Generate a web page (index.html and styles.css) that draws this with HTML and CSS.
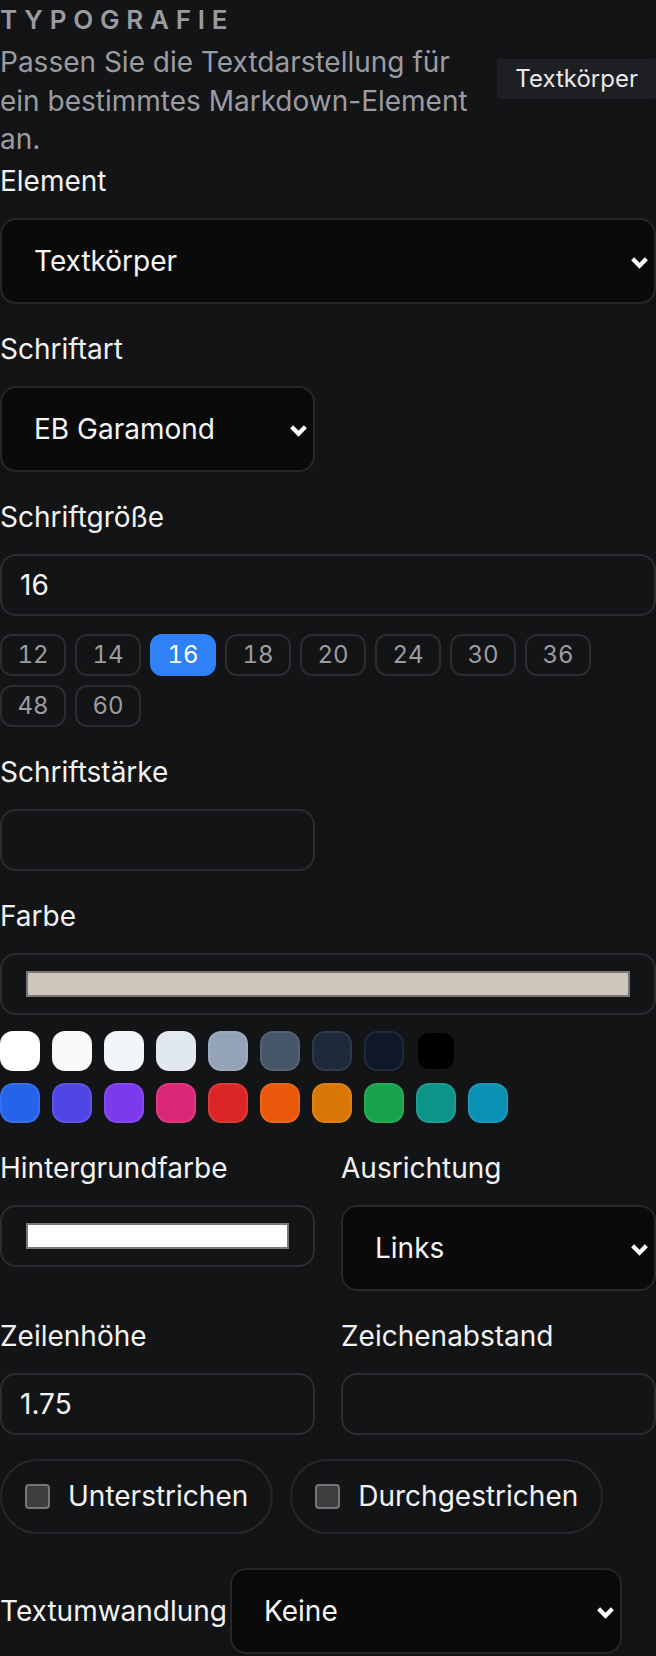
FILE: index.html
```html
<!DOCTYPE html>
<html lang="de">
<head>
    <meta charset="UTF-8">
    <meta name="viewport" content="width=device-width, initial-scale=1.0">
    <title>Typografie</title>
    <link rel="stylesheet" href="styles.css">
</head>
<body>
    <div class="panel">
        <div class="panel-head">
            <div class="panel-intro">
                <h2 class="panel-title">Typografie</h2>
                <p class="panel-desc">Passen Sie die Textdarstellung für ein bestimmtes Markdown-Element an.</p>
            </div>
            <span class="badge">Textkörper</span>
        </div>

        <div class="field">
            <label for="element">Element</label>
            <div class="select-wrap">
                <select id="element">
                    <option>Textkörper</option>
                    <option>Überschrift 1</option>
                    <option>Überschrift 2</option>
                    <option>Zitat</option>
                </select>
                <svg class="chevron" viewBox="0 0 18 12"><path d="M2.5 2.5l6.5 6.5 6.5-6.5"/></svg>
            </div>
        </div>

        <div class="field">
            <label for="fontFamily">Schriftart</label>
            <div class="select-wrap half">
                <select id="fontFamily">
                    <option>EB Garamond</option>
                    <option>Inter</option>
                    <option>Lato</option>
                </select>
                <svg class="chevron" viewBox="0 0 18 12"><path d="M2.5 2.5l6.5 6.5 6.5-6.5"/></svg>
            </div>
        </div>

        <div class="field">
            <label for="fontSize">Schriftgröße</label>
            <input type="text" id="fontSize" class="text-input" value="16">
            <div class="chips">
                <button class="chip">12</button>
                <button class="chip">14</button>
                <button class="chip active">16</button>
                <button class="chip">18</button>
                <button class="chip">20</button>
                <button class="chip">24</button>
                <button class="chip">30</button>
                <button class="chip">36</button>
                <button class="chip">48</button>
                <button class="chip">60</button>
            </div>
        </div>

        <div class="field">
            <label for="fontWeight">Schriftstärke</label>
            <input type="text" id="fontWeight" class="text-input half">
        </div>

        <div class="field">
            <label for="color">Farbe</label>
            <input type="color" id="color" class="color-input" value="#cdc6b9">
            <div class="swatches">
                <div class="swatch-row">
                    <span class="swatch" style="background:#ffffff"></span>
                    <span class="swatch" style="background:#f8fafc"></span>
                    <span class="swatch" style="background:#f1f5f9"></span>
                    <span class="swatch" style="background:#e2e8f0"></span>
                    <span class="swatch" style="background:#94a3b8"></span>
                    <span class="swatch" style="background:#475569"></span>
                    <span class="swatch" style="background:#1e293b"></span>
                    <span class="swatch" style="background:#0f172a"></span>
                    <span class="swatch" style="background:#000000"></span>
                </div>
                <div class="swatch-row">
                    <span class="swatch" style="background:#2563eb"></span>
                    <span class="swatch" style="background:#4f46e5"></span>
                    <span class="swatch" style="background:#7c3aed"></span>
                    <span class="swatch" style="background:#db2777"></span>
                    <span class="swatch" style="background:#dc2626"></span>
                    <span class="swatch" style="background:#ea580c"></span>
                    <span class="swatch" style="background:#d97706"></span>
                    <span class="swatch" style="background:#16a34a"></span>
                    <span class="swatch" style="background:#0d9488"></span>
                    <span class="swatch" style="background:#0891b2"></span>
                </div>
            </div>
        </div>

        <div class="field-row">
            <div class="field">
                <label for="bgColor">Hintergrundfarbe</label>
                <input type="color" id="bgColor" class="color-input" value="#ffffff">
            </div>
            <div class="field">
                <label for="align">Ausrichtung</label>
                <div class="select-wrap">
                    <select id="align">
                        <option>Links</option>
                        <option>Zentriert</option>
                        <option>Rechts</option>
                    </select>
                    <svg class="chevron" viewBox="0 0 18 12"><path d="M2.5 2.5l6.5 6.5 6.5-6.5"/></svg>
                </div>
            </div>
        </div>

        <div class="field-row">
            <div class="field">
                <label for="lineHeight">Zeilenhöhe</label>
                <input type="text" id="lineHeight" class="text-input" value="1.75">
            </div>
            <div class="field">
                <label for="letterSpacing">Zeichenabstand</label>
                <input type="text" id="letterSpacing" class="text-input">
            </div>
        </div>

        <div class="toggles">
            <label class="toggle"><input type="checkbox"> Unterstrichen</label>
            <label class="toggle"><input type="checkbox"> Durchgestrichen</label>
        </div>

        <div class="inline-field">
            <label for="transform">Textumwandlung</label>
            <div class="select-wrap transform">
                <select id="transform">
                    <option>Keine</option>
                    <option>Großbuchstaben</option>
                    <option>Kleinbuchstaben</option>
                </select>
                <svg class="chevron" viewBox="0 0 18 12"><path d="M2.5 2.5l6.5 6.5 6.5-6.5"/></svg>
            </div>
        </div>
    </div>
</body>
</html>
```

FILE: styles.css
```css
* {
    box-sizing: border-box;
}

body {
    margin: 0;
    background-color: #131416;
    color: #f2f2f3;
    font-family: "Inter", "Noto Sans", sans-serif;
}

.panel {
    display: flex;
    flex-direction: column;
    gap: 24px;
    width: 656px;
}

.panel-head {
    display: flex;
    align-items: center;
    gap: 24px;
    margin-bottom: -23px;
}

.panel-intro {
    flex: 1;
}

.panel-title {
    margin: 0 0 3px;
    font-size: 26px;
    line-height: 40px;
    font-weight: 600;
    letter-spacing: 6.8px;
    text-transform: uppercase;
    color: #9a9ba1;
}

.panel-desc {
    margin: 0;
    font-size: 28px;
    line-height: 38.5px;
    color: #9b9ca2;
}

.badge {
    flex-shrink: 0;
    height: 40px;
    line-height: 40px;
    padding: 0 18px;
    background-color: #1e1f22;
    border-radius: 2px;
    font-size: 24px;
    color: #e8e8ea;
}

.field {
    display: flex;
    flex-direction: column;
}

.field > label {
    font-size: 28px;
    line-height: 42px;
    margin-bottom: 16px;
}

.field-row {
    display: grid;
    grid-template-columns: 315px 315px;
    gap: 26px;
    align-items: start;
}

.select-wrap {
    position: relative;
    width: 100%;
}

.select-wrap.half {
    width: 315px;
}

.select-wrap select {
    appearance: none;
    -webkit-appearance: none;
    width: 100%;
    height: 86px;
    padding: 0 48px 0 32px;
    background-color: #0a0a0b;
    border: 2px solid #26272a;
    border-radius: 16px;
    color: #f5f5f6;
    font-family: inherit;
    font-size: 28px;
    outline: none;
}

.chevron {
    position: absolute;
    right: 7px;
    top: 50%;
    width: 19px;
    height: 13px;
    margin-top: -5px;
    fill: none;
    stroke: #ffffff;
    stroke-width: 4;
    pointer-events: none;
}

.text-input {
    width: 100%;
    height: 62px;
    padding: 0 18px;
    background: transparent;
    border: 2px solid #2b2c30;
    border-radius: 16px;
    color: #f5f5f6;
    font-family: inherit;
    font-size: 28px;
    outline: none;
}

.text-input.half {
    width: 315px;
}

.chips {
    display: flex;
    flex-wrap: wrap;
    gap: 9px;
    margin-top: 18px;
}

.chip {
    width: 66px;
    height: 42px;
    padding: 0;
    background: transparent;
    border: 2px solid #2b2c30;
    border-radius: 12px;
    color: #9a9ca2;
    font-family: inherit;
    font-size: 24px;
    font-variant-numeric: tabular-nums;
    text-align: center;
    cursor: pointer;
}

.chip.active {
    background-color: #2f81f7;
    border-color: #2f81f7;
    color: #ffffff;
}

.color-input {
    -webkit-appearance: none;
    appearance: none;
    width: 100%;
    height: 62px;
    padding: 16px 24px;
    background: transparent;
    border: 2px solid #2b2c30;
    border-radius: 16px;
    cursor: pointer;
}

.color-input::-webkit-color-swatch-wrapper {
    padding: 0;
}

.color-input::-webkit-color-swatch {
    border: 2px solid #76767a;
    border-radius: 0;
}

.swatches {
    display: flex;
    flex-direction: column;
    gap: 12px;
    margin-top: 16px;
}

.swatch-row {
    display: flex;
    gap: 12px;
}

.swatch {
    width: 40px;
    height: 40px;
    border: 2px solid rgba(255, 255, 255, 0.08);
    border-radius: 13px;
    cursor: pointer;
}

.toggles {
    display: flex;
    gap: 17px;
}

.toggle {
    display: flex;
    align-items: center;
    gap: 18px;
    height: 75px;
    padding: 0 23px;
    border: 2px solid #26272a;
    border-radius: 38px;
    font-size: 28px;
    cursor: pointer;
}

.toggle input {
    -webkit-appearance: none;
    appearance: none;
    width: 25px;
    height: 25px;
    margin: 0;
    background-color: #3e3e40;
    border: 2px solid #76767a;
    border-radius: 4px;
}

.inline-field {
    display: flex;
    align-items: center;
    gap: 3px;
    margin-top: 10px;
}

.inline-field > label {
    font-size: 28px;
}

.select-wrap.transform {
    width: 392px;
}
```
